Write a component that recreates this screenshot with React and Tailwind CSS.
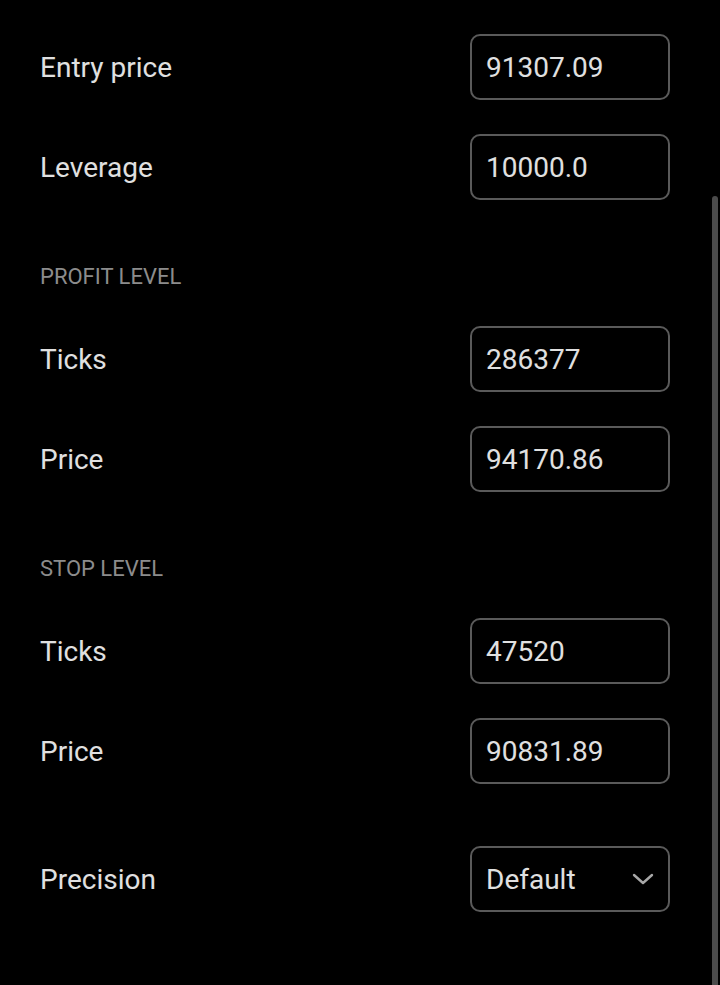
import React from "react";

function Row({ label, value, select }) {
  return (
    <div className="flex h-[100px] items-center justify-between pl-10 pr-[50px]">
      <span className="pt-[2px] text-[28px] text-[#e0e0e0]">{label}</span>
      <div className="flex h-[66px] w-[200px] items-center justify-between rounded-[10px] border-2 border-[#5a5a5a] pl-[14px] pr-[14px]">
        <span className="pt-[2px] text-[28px] text-[#e0e0e0]">{value}</span>
        {select && (
          <svg width="22" height="14" viewBox="0 0 22 14" fill="none">
            <path d="M2 3 L11 11 L20 3" stroke="#a8a8a8" strokeWidth="2.4" strokeLinecap="round" strokeLinejoin="round" />
          </svg>
        )}
      </div>
    </div>
  );
}

function Header({ text }) {
  return (
    <div className="flex h-[92px] items-start pl-10 pt-[46px]">
      <span className="text-[22px] leading-[28px] text-[#8c8c8c]">{text}</span>
    </div>
  );
}

export default function App() {
  return (
    <div
      className="relative h-[985px] w-[720px] overflow-hidden bg-black"
      style={{ fontFamily: "Roboto, 'Noto Sans', sans-serif" }}
    >
      <div className="-mt-[83px] flex flex-col">
        <div className="flex h-[100px] items-center justify-end pr-[50px]">
          <div className="h-[66px] w-[200px] rounded-[10px] border-2 border-[#5a5a5a]" />
        </div>
        <Row label="Entry price" value="91307.09" />
        <Row label="Leverage" value="10000.0" />
        <Header text="PROFIT LEVEL" />
        <Row label="Ticks" value="286377" />
        <Row label="Price" value="94170.86" />
        <Header text="STOP LEVEL" />
        <Row label="Ticks" value="47520" />
        <Row label="Price" value="90831.89" />
        <div className="h-[28px]" />
        <Row label="Precision" value="Default" select />
      </div>
      <div className="absolute right-[2px] top-[196px] h-[800px] w-[6px] rounded-t-[3px] bg-[#4b4b4b]" />
    </div>
  );
}
